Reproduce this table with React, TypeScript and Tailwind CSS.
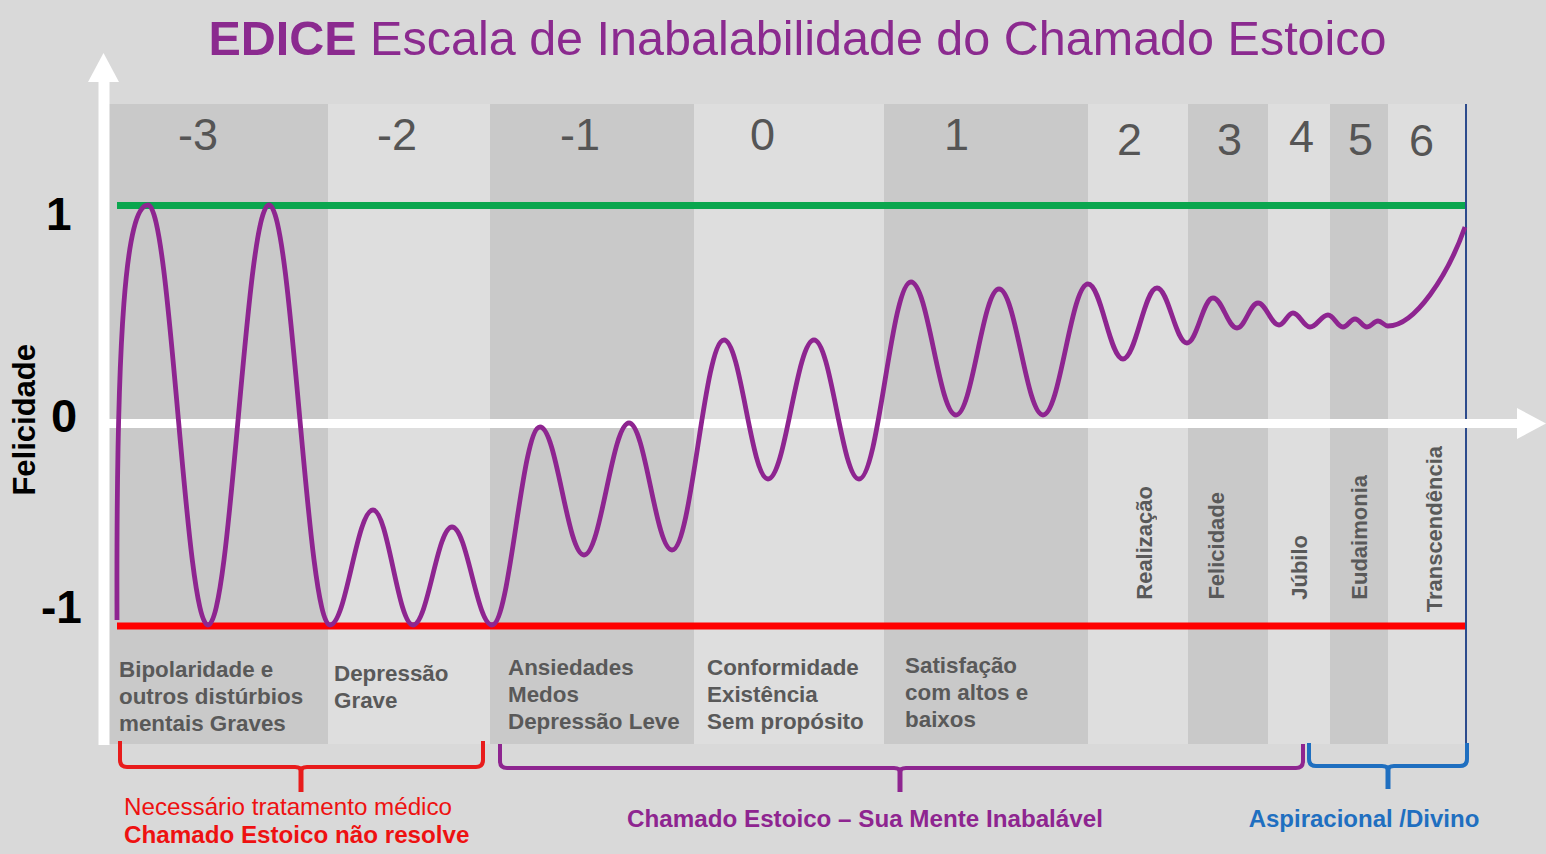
import React from 'react';

type Col = {
  w: string;
  dark: boolean;
  num: string;
  numPad: string;
  lines?: string[];
  linesPad?: string;
  vert?: string;
  vertCls?: string;
};

const cols: Col[] = [
  { w: 'w-[220px]', dark: true, num: '-3', numPad: 'pt-[8px] pl-[70px]', lines: ['Bipolaridade e', 'outros distúrbios', 'mentais Graves'], linesPad: 'pt-[56px] pl-[11px]' },
  { w: 'w-[162px]', dark: false, num: '-2', numPad: 'pt-[8px] pl-[49px]', lines: ['Depressão', 'Grave'], linesPad: 'pt-[60px] pl-[6px]' },
  { w: 'w-[204px]', dark: true, num: '-1', numPad: 'pt-[8px] pl-[70px]', lines: ['Ansiedades', 'Medos', 'Depressão Leve'], linesPad: 'pt-[54px] pl-[18px]' },
  { w: 'w-[190px]', dark: false, num: '0', numPad: 'pt-[8px] pl-[56px]', lines: ['Conformidade', 'Existência', 'Sem propósito'], linesPad: 'pt-[54px] pl-[13px]' },
  { w: 'w-[204px]', dark: true, num: '1', numPad: 'pt-[8px] pl-[60px]', lines: ['Satisfação', 'com altos e', 'baixos'], linesPad: 'pt-[52px] pl-[21px]' },
  { w: 'w-[100px]', dark: false, num: '2', numPad: 'pt-[13px] pl-[29px]', vert: 'Realização', vertCls: 'ml-[46px]' },
  { w: 'w-[80px]', dark: true, num: '3', numPad: 'pt-[13px] pl-[29px]', vert: 'Felicidade', vertCls: 'ml-[18px]' },
  { w: 'w-[62px]', dark: false, num: '4', numPad: 'pt-[10px] pl-[21px]', vert: 'Júbilo', vertCls: 'ml-[21px]' },
  { w: 'w-[58px]', dark: true, num: '5', numPad: 'pt-[13px] pl-[18px]', vert: 'Eudaimonia', vertCls: 'ml-[19px]' },
  { w: 'w-[78px]', dark: false, num: '6', numPad: 'pt-[14px] pl-[21px]', vert: 'Transcendência', vertCls: 'ml-[36px] mb-[-12px]' },
];

// peaks and troughs of the happiness wave, left to right
const pts: [number, number][] = [
  [148, 205], [208, 625], [269, 205], [330, 625], [373, 510], [413, 625], [452, 527], [492, 625],
  [540, 427], [584, 555], [629, 423], [672, 550], [724, 340], [768, 479], [814, 340], [859, 479],
  [911, 282], [956, 415], [999, 289], [1043, 415], [1088, 284], [1123, 359], [1157, 288], [1187, 343],
  [1213, 298], [1237, 328], [1258, 303], [1279, 325], [1293, 313], [1310, 327], [1328, 315], [1343, 327],
  [1355, 319], [1367, 327], [1378, 321], [1388, 326],
];

const wavePath = () => {
  let d = 'M117 620 C116 330 126 205 148 205';
  for (let i = 1; i < pts.length; i++) {
    const [x1, y1] = pts[i - 1];
    const [x2, y2] = pts[i];
    const k = (x2 - x1) * 0.38;
    d += ` C${x1 + k} ${y1} ${x2 - k} ${y2} ${x2} ${y2}`;
  }
  d += ' C1415 326 1448 275 1465 227';
  return d;
};

const brace = (x1: number, x2: number, mid: number, top: number, y: number) =>
  `M${x1} ${top} V${y - 7} Q${x1} ${y} ${x1 + 7} ${y} H${mid - 6} Q${mid} ${y} ${mid} ${y + 4} Q${mid} ${y} ${mid + 6} ${y} H${x2 - 7} Q${x2} ${y} ${x2} ${y - 7} V${top}`;

const Chart = () => (
  <svg className="absolute inset-0 pointer-events-none" width="1546" height="854" viewBox="0 0 1546 854">
    <line x1="117" y1="205.5" x2="1466" y2="205.5" stroke="#0aa64e" strokeWidth="7" />
    <line x1="117" y1="626" x2="1466" y2="626" stroke="#ff0000" strokeWidth="7" />
    <line x1="1466" y1="104" x2="1466" y2="744" stroke="#2d4b8c" strokeWidth="2" />
    <rect x="100" y="419" width="1418" height="9" fill="#ffffff" />
    <polygon points="1517,408 1546,423.5 1517,439" fill="#ffffff" />
    <rect x="98.5" y="80" width="11" height="665" fill="#ffffff" />
    <polygon points="88,82 103.5,53 119,82" fill="#ffffff" />
    <path d={wavePath()} fill="none" stroke="#8e2590" strokeWidth="4.8" strokeLinejoin="round" />
    <path d={brace(120, 483, 301, 741, 767)} fill="none" stroke="#e81c1c" strokeWidth="4" />
    <line x1="301" y1="768" x2="301" y2="792" stroke="#e81c1c" strokeWidth="5" />
    <path d={brace(500, 1303, 900, 744, 768)} fill="none" stroke="#8e2590" strokeWidth="4" />
    <line x1="900" y1="769" x2="900" y2="792" stroke="#8e2590" strokeWidth="5" />
    <path d={brace(1309, 1467, 1388, 743, 766)} fill="none" stroke="#1f6fc0" strokeWidth="4" />
    <line x1="1388" y1="767" x2="1388" y2="789" stroke="#1f6fc0" strokeWidth="5" />
  </svg>
);

export default function App() {
  return (
    <div className="relative w-[1546px] h-[854px] overflow-hidden bg-[#d9d9d9] font-['Liberation_Sans',Arial,sans-serif]">
      <div className="h-[104px] pt-[14px] pl-[49px] flex justify-center text-[48.5px] leading-none text-[#8b2a8f]">
        <h1>
          <span className="font-bold">EDICE</span> Escala de Inabalabilidade do Chamado Estoico
        </h1>
      </div>

      <div className="flex h-[640px] pl-[108px]">
        {cols.map((c) => (
          <div key={c.num} className={`${c.w} ${c.dark ? 'bg-[#c9c9c9]' : 'bg-[#dedede]'} flex flex-col h-full shrink-0`}>
            <div className={`${c.numPad} text-[45px] leading-none text-[#555555]`}>{c.num}</div>
            <div className="flex-1 flex items-end">
              {c.vert && (
                <span className={`${c.vertCls} [writing-mode:vertical-rl] rotate-180 text-[22px] leading-none font-bold text-[#595959] whitespace-nowrap`}>
                  {c.vert}
                </span>
              )}
            </div>
            <div className={`h-[144px] ${c.linesPad ?? ''} text-[22.4px] leading-[27px] font-bold text-[#595959] whitespace-nowrap`}>
              {c.lines?.map((l) => <div key={l}>{l}</div>)}
            </div>
          </div>
        ))}
      </div>

      <div className="flex items-start">
        <div className="w-[565px] pl-[124px] pt-[49px] text-[24.2px] leading-[28px] text-[#ee1111] whitespace-nowrap">
          <div>Necessário tratamento médico</div>
          <div className="font-bold">Chamado Estoico não resolve</div>
        </div>
        <div className="w-[600px] pt-[61px] text-center text-[24.2px] leading-[28px] font-bold text-[#8e2590] whitespace-nowrap">
          Chamado Estoico – Sua Mente Inabalável
        </div>
        <div className="w-[300px] ml-[49px] pt-[61px] text-center text-[24px] leading-[28px] font-bold text-[#1f6fc0] whitespace-nowrap">
          Aspiracional /Divino
        </div>
      </div>

      <Chart />

      <div className="absolute left-[9px] top-[344px] [writing-mode:vertical-rl] rotate-180 text-[31px] leading-none font-bold text-black">
        Felicidade
      </div>
      <div className="absolute left-[46px] top-[191px] text-[46px] leading-none font-bold text-black">1</div>
      <div className="absolute left-[51px] top-[392px] text-[47px] leading-none font-bold text-black">0</div>
      <div className="absolute left-[41px] top-[584px] text-[46px] leading-none font-bold text-black">-1</div>
    </div>
  );
}
